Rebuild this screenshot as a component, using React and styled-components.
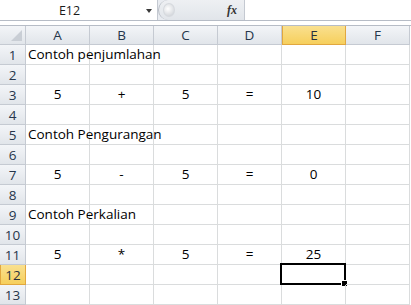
import React from 'react';
import styled, { createGlobalStyle } from 'styled-components';

const Global = createGlobalStyle`
   html, body {
      margin: 0;
      padding: 0;
      background: #ffffff;
      overflow: hidden;
   }
`;

const Page = styled.div`
   width: 411px;
   height: 305px;
   overflow: hidden;
   font-family: "Open Sans", "Noto Sans", sans-serif;
`;

const FormulaBar = styled.div`
   display: flex;
   height: 21px;
   background: #e9ecf1;
   border-bottom: 1px solid #b6bcc6;
   box-sizing: border-box;
`;

const NameBox = styled.div`
   position: relative;
   width: 158px;
   display: flex;
   align-items: center;
   justify-content: center;
   background: #ffffff;
   border-right: 1px solid #c4c9d1;
   font-size: 12.5px;
   color: #1b1b1b;
   padding-right: 18px;
   box-sizing: border-box;
`;

const DropArrow = styled.span`
   position: absolute;
   right: 5px;
   top: 9px;
   width: 0;
   height: 0;
   border-left: 3.5px solid transparent;
   border-right: 3.5px solid transparent;
   border-top: 4px solid #3a3a3a;
`;

const Splitter = styled.div`
   flex: 1;
   display: flex;
   align-items: center;
   justify-content: space-between;
   padding: 0 7px 0 4px;
   border-radius: 10px 0 0 10px;
   border-left: 1px solid #b9bec6;
   background: linear-gradient(#eef0f3, #e1e5ea);
`;

const Knob = styled.span`
   width: 10px;
   height: 12px;
   border-radius: 50%;
   background: radial-gradient(circle at 40% 40%, #ffffff, #c8ccd2);
   border: 1px solid #d6d9de;
`;

const Fx = styled.span`
   font-family: "Liberation Serif", serif;
   font-style: italic;
   font-weight: bold;
   font-size: 12px;
   color: #333;
`;

const FormulaInput = styled.div`
   width: 166px;
   background: #ffffff;
   border-left: 1px solid #c4c9d1;
`;

const Strip = styled.div`
   height: 4px;
   background: #ffffff;
   border-bottom: 1px solid #b6bcc6;
`;

const Grid = styled.div`
   display: grid;
   grid-template-columns: 26px repeat(6, 64px);
   grid-template-rows: 19px;
   grid-auto-rows: 20px;
`;

const Head = styled.div`
   display: flex;
   align-items: center;
   justify-content: center;
   box-sizing: border-box;
   font-size: 13.5px;
   color: ${p => (p.$active ? '#29313d' : '#26364b')};
   background: ${p => (p.$active
      ? 'linear-gradient(#f9e08f, #f6cf5c)'
      : 'linear-gradient(#f3f5f8, #e1e5ea)')};
   border-right: 1px solid ${p => (p.$active ? '#e1a73f' : '#c5cad2')};
   border-bottom: 1px solid ${p => (p.$active ? '#e1a73f' : '#c5cad2')};
   ${p => p.$active && 'border-left: 1px solid #e1a73f;'}
`;

const Corner = styled(Head)`
   position: relative;
   &::after {
      content: '';
      position: absolute;
      right: 3px;
      bottom: 3px;
      width: 0;
      height: 0;
      border-left: 11px solid transparent;
      border-bottom: 11px solid #c9ced5;
   }
`;

const Cell = styled.div`
   position: relative;
   display: flex;
   align-items: flex-end;
   justify-content: ${p => (p.$left ? 'flex-start' : 'center')};
   padding: 0 2px 1px;
   box-sizing: border-box;
   border-right: 1px solid #dadcdd;
   border-bottom: 1px solid #dadcdd;
   font-size: 13.5px;
   color: #000;
   white-space: nowrap;
   overflow: visible;
   z-index: ${p => (p.$left ? 1 : 0)};
`;

const Selection = styled.div`
   position: absolute;
   left: -2px;
   top: -2px;
   right: -1px;
   bottom: -1px;
   border: 2px solid #000;
   &::after {
      content: '';
      position: absolute;
      right: -4px;
      bottom: -4px;
      width: 5px;
      height: 5px;
      background: #000;
      border: 1px solid #fff;
   }
`;

const cols = ['A', 'B', 'C', 'D', 'E', 'F'];

const data = {
   1: [{ t: 'Contoh penjumlahan', left: true }],
   3: ['5', '+', '5', '=', '10'],
   5: [{ t: 'Contoh Pengurangan', left: true }],
   7: ['5', '-', '5', '=', '0'],
   9: [{ t: 'Contoh Perkalian', left: true }],
   11: ['5', '*', '5', '=', '25'],
};

const App = () => {
   const rows = Array.from({ length: 13 }, (_, i) => i + 1);
   return (
      <Page>
         <Global />
         <FormulaBar>
            <NameBox>
               E12
               <DropArrow />
            </NameBox>
            <Splitter>
               <Knob />
               <Fx>fx</Fx>
            </Splitter>
            <FormulaInput />
         </FormulaBar>
         <Strip />
         <Grid>
            <Corner />
            {cols.map(c => (
               <Head key={c} $active={c === 'E'}>{c}</Head>
            ))}
            {rows.map(r => (
               <React.Fragment key={r}>
                  <Head $active={r === 12}>{r}</Head>
                  {cols.map((c, ci) => {
                     const row = data[r] || [];
                     const v = row[ci];
                     const text = v && typeof v === 'object' ? v.t : v;
                     const left = v && typeof v === 'object' && v.left;
                     return (
                        <Cell key={c} $left={left}>
                           {text}
                           {r === 12 && c === 'E' && <Selection />}
                        </Cell>
                     );
                  })}
               </React.Fragment>
            ))}
         </Grid>
      </Page>
   );
};

export default App;
